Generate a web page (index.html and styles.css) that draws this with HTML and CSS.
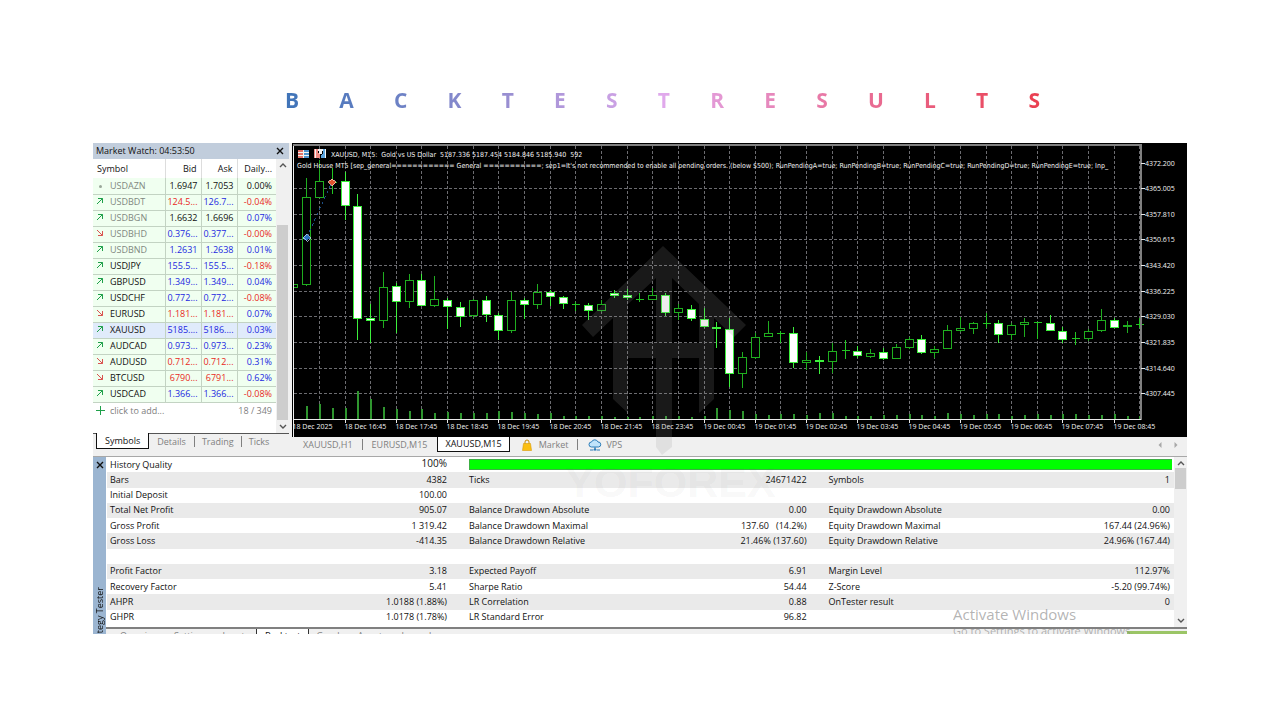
FILE: index.html
```html
<!DOCTYPE html>
<html lang="en">
<head>
  <meta charset="UTF-8" />
  <meta name="viewport" content="width=device-width, initial-scale=1.0" />
  <title>Backtest Results</title>
  <link rel="stylesheet" href="styles.css">
</head>
<body>
  <h1 class="title" aria-label="Backtest results">
    <span>B</span><span>A</span><span>C</span><span>K</span><span>T</span><span>E</span><span>S</span><span>T</span><span>R</span><span>E</span><span>S</span><span>U</span><span>L</span><span>T</span><span>S</span>
  </h1>

  <main class="terminal">
    <div class="top">
      <section class="watch">
        <header class="watch-title">
          <span>Market Watch: 04:53:50</span>
          <button class="close" aria-label="Close Market Watch"><svg viewBox="0 0 8 8"><path d="M1 1l6 6M7 1l-6 6"/></svg></button>
        </header>
        <div class="watch-body">
          <div class="watch-list">
            <table class="symbols">
              <colgroup><col><col class="c-price"><col class="c-price"><col class="c-daily"></colgroup>
              <thead>
                <tr><th>Symbol</th><th>Bid</th><th>Ask</th><th>Daily...</th></tr>
              </thead>
              <tbody>
                <tr class="off"><td><i class="dot"></i>USDAZN</td><td>1.6947</td><td>1.7053</td><td>0.00%</td></tr>
                <tr class="off"><td><svg class="up"><use href="#arrow-up"/></svg>USDBDT</td><td class="red">124.5...</td><td class="blue">126.7...</td><td class="red">-0.04%</td></tr>
                <tr class="off"><td><svg class="up"><use href="#arrow-up"/></svg>USDBGN</td><td>1.6632</td><td>1.6696</td><td class="blue">0.07%</td></tr>
                <tr class="off"><td><svg class="down"><use href="#arrow-down"/></svg>USDBHD</td><td class="blue">0.376...</td><td class="blue">0.377...</td><td class="red">-0.00%</td></tr>
                <tr class="off"><td><svg class="up"><use href="#arrow-up"/></svg>USDBND</td><td class="blue">1.2631</td><td class="blue">1.2638</td><td class="blue">0.01%</td></tr>
                <tr><td><svg class="up"><use href="#arrow-up"/></svg>USDJPY</td><td class="blue">155.5...</td><td class="blue">155.5...</td><td class="red">-0.18%</td></tr>
                <tr><td><svg class="up"><use href="#arrow-up"/></svg>GBPUSD</td><td class="blue">1.349...</td><td class="blue">1.349...</td><td class="blue">0.04%</td></tr>
                <tr><td><svg class="up"><use href="#arrow-up"/></svg>USDCHF</td><td class="blue">0.772...</td><td class="blue">0.772...</td><td class="red">-0.08%</td></tr>
                <tr><td><svg class="down"><use href="#arrow-down"/></svg>EURUSD</td><td class="red">1.181...</td><td class="red">1.181...</td><td class="blue">0.07%</td></tr>
                <tr class="selected"><td><svg class="up"><use href="#arrow-up"/></svg>XAUUSD</td><td class="blue">5185....</td><td class="blue">5186....</td><td class="blue">0.03%</td></tr>
                <tr><td><svg class="up"><use href="#arrow-up"/></svg>AUDCAD</td><td class="blue">0.973...</td><td class="blue">0.973...</td><td class="blue">0.23%</td></tr>
                <tr><td><svg class="down"><use href="#arrow-down"/></svg>AUDUSD</td><td class="red">0.712...</td><td class="red">0.712...</td><td class="blue">0.31%</td></tr>
                <tr><td><svg class="down"><use href="#arrow-down"/></svg>BTCUSD</td><td class="red">6790...</td><td class="red">6791...</td><td class="blue">0.62%</td></tr>
                <tr><td><svg class="up"><use href="#arrow-up"/></svg>USDCAD</td><td class="blue">1.366...</td><td class="blue">1.366...</td><td class="red">-0.08%</td></tr>
              </tbody>
            </table>
            <div class="add-row">
              <button class="add"><svg class="plus" viewBox="0 0 9 9"><path d="M4.5 0v9M0 4.5h9"/></svg>click to add...</button>
              <span>18 / 349</span>
            </div>
          </div>
          <div class="scrollbar">
            <svg viewBox="0 0 8 6"><path d="M1 5l3-3 3 3"/></svg>
            <div class="track watch-track"><div class="thumb"></div></div>
            <svg viewBox="0 0 8 6"><path d="M1 1l3 3 3-3"/></svg>
          </div>
        </div>
        <nav class="watch-tabs">
          <button class="active">Symbols</button>
          <button>Details</button>
          <button>Trading</button>
          <button>Ticks</button>
        </nav>
      </section>

      <section class="chart-pane">
        <svg id="chart" class="chart" viewBox="292 143 895 294" role="img" aria-label="XAUUSD M15 candlestick chart">
          <rect class="bg" x="292" y="143" width="895" height="294"/>
          <g id="grid"></g>
          <g id="volumes"></g>
          <g id="candles"></g>
          <path class="frame" d="M293.5 437V145"/>
          <path class="frame-dim" d="M293 145H1141V420"/>
          <path class="axis" d="M294 419.5H1141"/>
          <g id="labels"></g>

          <path class="trade" d="M307 237L332 182"/>
          <path class="buy" d="M306.500 234l4 4-4 3-4-3z"/>
          <path class="sell" d="M332 186l-4-4 4-3 4 3z"/>

          <g class="one-click">
            <rect x="298" y="150" width="11" height="8" fill="#f4f4f4"/>
            <path d="M298 150h5v2h-5zM298 153h5v2h-5zM298 156h5v2h-5z" fill="#e4756c"/>
            <path d="M304 150h5v2h-5zM304 153h5v2h-5zM304 156h5v2h-5z" fill="#4e93cf"/>
          </g>
          <g class="depth">
            <path d="M314 149h4v4l2 2v3h-6z" fill="#f08c84"/>
            <path d="M326 149h-3v4l-2 2v3h5z" fill="#5aa6e0"/>
            <path d="M318 149h5v2h-1v3h-3v-3h-1z" fill="#f4f4f4"/>
            <path d="M315 149v9M325 149v9" stroke="#f4f4f4"/>
          </g>
          <text class="info" x="331" y="157">XAUUSD, M15:&#160; Gold vs US Dollar&#160; 5187.336 5187.454 5184.846 5185.940&#160; 592</text>
          <text class="info" x="297" y="168">Gold House MT5 [sep_general============ General ===========; sep1=It's not recommended to enable all pending orders. (below $500); RunPendingA=true; RunPendingB=true; RunPendingC=true; RunPendingD=true; RunPendingE=true; Inp_</text>
        </svg>

        <nav class="chart-tabs">
          <button class="h1">XAUUSD,H1</button>
          <button class="m15">EURUSD,M15</button>
          <button class="active">XAUUSD,M15</button>
          <button class="market">
            <svg viewBox="0 0 10 12"><path d="M3 5V3a2 2 0 0 1 4 0v2" fill="none" stroke="#c98a00"/><path d="M1.500 4.500h7l1 7h-9z" fill="#fbbf12" stroke="#d99a06" stroke-width=".6"/></svg>
            Market
          </button>
          <button class="vps">
            <svg viewBox="0 0 14 12"><path d="M3.500 8a2.500 2.500 0 0 1 0-5A3.500 3.500 0 0 1 10 3a2.500 2.500 0 0 1 .5 5z" fill="#bfe3fa" stroke="#2b7cb8"/><path d="M7 8v2M2 11h3.500M8.500 11H12" stroke="#2b7cb8"/><circle cx="7" cy="10.500" r="1.200" fill="#2b7cb8"/></svg>
            VPS
          </button>
          <span class="arrows">
            <button aria-label="Previous tabs"><svg viewBox="0 0 4 6"><path d="M3.500 0v6L.5 3z"/></svg></button>
            <button aria-label="Next tabs"><svg viewBox="0 0 4 6"><path d="M.5 0v6l3-3z"/></svg></button>
          </span>
        </nav>
      </section>
    </div>

    <section class="tester">
      <aside class="tester-side">
        <button class="close" aria-label="Close Strategy Tester"><svg viewBox="0 0 8 8"><path d="M1 1l6 6M7 1l-6 6"/></svg></button>
        <span class="tester-name">Strategy Tester</span>
      </aside>
      <div class="tester-main">
        <div class="tester-body">
          <table class="report">
            <colgroup><col class="c-label"><col class="c-v1"><col class="c-label"><col class="c-v2"><col class="c-label"><col class="c-v3"></colgroup>
            <tbody>
              <tr><th>History Quality</th><td class="quality">100%</td><td colspan="4" class="bar-cell"><div class="bar"></div></td></tr>
              <tr><th>Bars</th><td>4382</td><th>Ticks</th><td>24671422</td><th>Symbols</th><td>1</td></tr>
              <tr><th>Initial Deposit</th><td>100.00</td><th></th><td></td><th></th><td></td></tr>
              <tr><th>Total Net Profit</th><td>905.07</td><th>Balance Drawdown Absolute</th><td>0.00</td><th>Equity Drawdown Absolute</th><td>0.00</td></tr>
              <tr><th>Gross Profit</th><td>1 319.42</td><th>Balance Drawdown Maximal</th><td>137.60 &nbsp; (14.2%)</td><th>Equity Drawdown Maximal</th><td>167.44 (24.96%)</td></tr>
              <tr><th>Gross Loss</th><td>-414.35</td><th>Balance Drawdown Relative</th><td>21.46% (137.60)</td><th>Equity Drawdown Relative</th><td>24.96% (167.44)</td></tr>
              <tr><th></th><td></td><th></th><td></td><th></th><td></td></tr>
              <tr><th>Profit Factor</th><td>3.18</td><th>Expected Payoff</th><td>6.91</td><th>Margin Level</th><td>112.97%</td></tr>
              <tr><th>Recovery Factor</th><td>5.41</td><th>Sharpe Ratio</th><td>54.44</td><th>Z-Score</th><td>-5.20 (99.74%)</td></tr>
              <tr><th>AHPR</th><td>1.0188 (1.88%)</td><th>LR Correlation</th><td>0.88</td><th>OnTester result</th><td>0</td></tr>
              <tr><th>GHPR</th><td>1.0178 (1.78%)</td><th>LR Standard Error</th><td>96.82</td><th></th><td></td></tr>
            </tbody>
          </table>
          <div class="scrollbar">
            <svg viewBox="0 0 8 6"><path d="M1 5l3-3 3 3"/></svg>
            <div class="track"><div class="thumb"></div></div>
            <svg viewBox="0 0 8 6"><path d="M1 1l3 3 3-3"/></svg>
          </div>
        </div>
        <nav class="tester-tabs">
          <button>Overview</button>
          <button>Settings</button>
          <button>Inputs</button>
          <button class="active">Backtest</button>
          <button>Graph</button>
          <button>Agents</button>
          <button>Journal</button>
          <span class="progress"></span>
        </nav>
      </div>
    </section>

    <div class="watermark" aria-hidden="true">
      <svg viewBox="0 0 164 210">
        <path d="M81 0l83 79-12 12-20-19v81l-15 14v-55H90v89l-10 8-6-8v-89H46v55l-15-14V72L11 91 0 79zM74 32L46 58v39h28zM90 32v65h27V58z"/>
      </svg>
      <span>YOFOREX</span>
    </div>
    <div class="activate">
      <strong>Activate Windows</strong>
      <span>Go to Settings to activate Windows.</span>
    </div>
  </main>

  <svg class="defs">
    <symbol id="arrow-up" viewBox="0 0 8 8"><path d="M1 7l5.500-5.500M2 1.500h4.500V6"/></symbol>
    <symbol id="arrow-down" viewBox="0 0 8 8"><path d="M1 1l5.500 5.500M2 6.500h4.500V2"/></symbol>
  </svg>

<script>
  const SVG = "http://www.w3.org/2000/svg";
  const FIRST_X = 306.6;
  const STEP = 12.82;
  const BASE_Y = 419;

  // high, body top, body bottom, low, type (u = hollow, d = filled, x = doji)
  const candles = [
    [178, 197, 285, 286, "u"], [160, 181, 198, 198, "u"], [168, 182, 182, 194, "x"],
    [172, 181, 206, 220, "d"], [194, 206, 319, 340, "d"], [304, 318, 321, 343, "d"],
    [272, 287, 321, 328, "u"], [283, 286, 302, 333, "d"], [274, 280, 302, 308, "u"],
    [274, 280, 306, 306, "d"], [276, 299, 306, 307, "u"], [298, 300, 307, 329, "d"],
    [302, 307, 317, 327, "d"], [299, 300, 316, 318, "u"], [296, 300, 315, 322, "d"],
    [313, 315, 331, 340, "d"], [292, 300, 331, 333, "u"], [298, 300, 305, 319, "d"],
    [284, 292, 305, 309, "u"], [290, 292, 297, 306, "d"], [296, 297, 304, 309, "d"],
    [302, 304, 304, 311, "x"], [303, 305, 311, 320, "d"], [300, 304, 311, 312, "u"],
    [290, 293, 296, 298, "d"], [289, 295, 298, 300, "d"], [293, 299, 299, 302, "x"],
    [288, 295, 300, 300, "u"], [293, 295, 313, 316, "d"], [304, 308, 313, 320, "u"],
    [305, 309, 319, 321, "d"], [308, 319, 327, 328, "d"], [322, 327, 329, 348, "d"],
    [318, 329, 374, 387, "d"], [352, 357, 374, 388, "u"], [333, 337, 358, 359, "u"],
    [321, 333, 337, 337, "u"], [331, 333, 333, 343, "x"], [327, 333, 363, 368, "d"],
    [352, 360, 363, 370, "u"], [356, 360, 362, 374, "d"], [343, 351, 362, 373, "u"],
    [340, 350, 350, 359, "x"], [346, 351, 356, 358, "d"], [349, 353, 357, 358, "u"],
    [348, 352, 359, 360, "d"], [344, 347, 359, 359, "u"], [337, 339, 348, 349, "u"],
    [335, 339, 353, 354, "d"], [346, 349, 353, 358, "u"], [325, 330, 349, 349, "u"],
    [317, 328, 331, 332, "u"], [322, 323, 329, 334, "u"], [313, 323, 323, 328, "x"],
    [320, 323, 335, 343, "d"], [323, 325, 335, 340, "u"], [318, 322, 325, 337, "u"],
    [322, 322, 322, 339, "x"], [315, 323, 331, 331, "d"], [327, 331, 340, 343, "d"],
    [332, 338, 338, 345, "x"], [329, 331, 339, 341, "u"], [309, 320, 331, 332, "u"],
    [318, 320, 328, 328, "d"], [321, 325, 327, 333, "u"], [318, 324, 324, 328, "x"]
  ];

  const volumes = [
    13, 15, 11, 11, 28, 20, 12, 10, 8, 10, 6, 7, 6, 6, 6, 8, 7, 6, 5, 6, 3, 3,
    3, 3, 2, 2, 2, 3, 3, 3, 2, 3, 11, 9, 8, 5, 4, 5, 5, 4, 6, 6, 3, 3, 3, 4,
    4, 5, 4, 3, 6, 5, 4, 5, 5, 3, 4, 5, 4, 5, 5, 4, 4, 5, 3, 3
  ];

  const prices = ["4372.200", "4365.005", "4357.810", "4350.615", "4343.420",
    "4336.225", "4329.030", "4321.835", "4314.640", "4307.445"];

  const times = ["18 Dec 2025", "18 Dec 16:45", "18 Dec 17:45", "18 Dec 18:45",
    "18 Dec 19:45", "18 Dec 20:45", "18 Dec 21:45", "18 Dec 23:45", "19 Dec 00:45",
    "19 Dec 01:45", "19 Dec 02:45", "19 Dec 03:45", "19 Dec 04:45", "19 Dec 05:45",
    "19 Dec 06:45", "19 Dec 07:45", "19 Dec 08:45"];

  function add(parent, tag, attrs, text) {
    const el = document.createElementNS(SVG, tag);
    for (const k in attrs) el.setAttribute(k, attrs[k]);
    if (text) el.textContent = text;
    document.getElementById(parent).appendChild(el);
  }

  const xAt = i => Math.floor(FIRST_X + STEP * i) + 0.5;

  // grid and price scale
  for (let i = 1; i < 66; i += 2) {
    add("grid", "path", { d: `M${xAt(i)} 146V419` });
  }
  prices.forEach((p, i) => {
    const y = Math.floor(163 + 25.65 * i) + 0.5;
    if (i > 0) add("grid", "path", { d: `M294 ${y}H1140` });
    add("labels", "path", { class: "tick", d: `M1141 ${y}h4` });
    add("labels", "text", { x: 1145, y: y + 2.5 }, p);
  });

  // time scale
  times.forEach((t, i) => {
    const x = i ? xAt(i * 4 - 1) : 293.5;
    if (i) add("labels", "path", { class: "tick", d: `M${x} 420v3` });
    add("labels", "text", { x: x - 1, y: 429 }, t);
  });

  volumes.forEach((v, i) => {
    add("volumes", "path", { d: `M${xAt(i)} ${BASE_Y}v${-v}` });
  });

  add("candles", "path", { class: "u", d: "M294 284.500h3.500v3h-3.500" });
  candles.forEach(([high, top, bottom, low, type], i) => {
    const x = xAt(i);
    if (type === "x") {
      add("candles", "path", { class: "x", d: `M${x} ${high}V${low}M${x - 4} ${top + 0.5}h8` });
      return;
    }
    add("candles", "path", { class: type, d: `M${x} ${high}V${top}M${x} ${bottom}V${low}` });
    add("candles", "rect", { class: type, x: x - 4, y: top + 0.5, width: 8, height: Math.max(bottom - top - 1, 1) });
  });
</script>
</body>
</html>
```
FILE: styles.css
```css
* {
  box-sizing: border-box;
}
body {
  margin: 0;
  background: #fff;
  color: #111;
  font-family: "Open Sans", "Noto Sans", sans-serif;
  font-size: 9px;
  line-height: 12px;
}
button {
  font: inherit;
  color: inherit;
  background: none;
  border: 0;
  padding: 0;
  cursor: pointer;
}
svg {
  display: block;
}
.defs {
  display: none;
}

/* heading */
.title {
  display: flex;
  justify-content: space-between;
  width: 59%;
  height: 32px;
  margin: 84px auto 27px 285px;
  font-size: 21px;
  font-weight: 700;
  line-height: 32px;
  color: transparent;
  background: linear-gradient(90deg, #3f74b8, #9a8fd2 30%, #e0a9ec 50%, #e87fb0 68%, #ea3f50);
  -webkit-background-clip: text;
  background-clip: text;
}

/* terminal window */
.terminal {
  position: relative;
  margin: 0 93px;
  background: #f0f0f0;
  overflow: hidden;
}
.top {
  display: grid;
  grid-template-columns: 196px 1fr;
  column-gap: 3px;
  border-bottom: 1px solid #a8a8a8;
}
.close svg {
  width: 8px;
  height: 8px;
  fill: none;
  stroke: #111;
  stroke-width: 1.4;
}

/* market watch */
.watch {
  display: flex;
  flex-direction: column;
}
.watch-title {
  display: flex;
  align-items: center;
  justify-content: space-between;
  height: 16px;
  padding: 0 5px 0 3px;
  background: #c1cddc;
}
.watch-body {
  display: flex;
  flex: 1;
  background: #fff;
}
.watch-list {
  flex: 1;
}
.symbols {
  width: 100%;
  table-layout: fixed;
  border-collapse: collapse;
}
.c-price {
  width: 36px;
}
.c-daily {
  width: 39px;
}
.symbols th {
  height: 19px;
  padding: 0 4px;
  font-weight: 400;
  text-align: right;
  border-left: 1px solid #ddd;
}
.symbols th:first-child {
  text-align: left;
  border-left: 0;
}
.symbols td {
  height: 16px;
  padding: 0 3px 0 0;
  text-align: right;
  white-space: nowrap;
  background: #f0fff0;
  border-left: 1px solid #c3d3c3;
  border-bottom: 1px solid #c3d3c3;
}
.symbols td:last-child {
  padding-right: 4px;
}
.symbols td:first-child {
  padding-left: 3px;
  text-align: left;
  border-left: 0;
}
.symbols td svg,
.symbols .dot {
  display: inline-block;
  width: 8px;
  height: 8px;
  margin-right: 6px;
  vertical-align: baseline;
  fill: none;
}
.symbols .dot {
  width: 3px;
  height: 3px;
  margin: 0 8px 0 3px;
  border-radius: 50%;
  background: #9aa89a;
  vertical-align: middle;
}
.up {
  stroke: #1fa04a;
}
.down {
  stroke: #d9534f;
}
.symbols .off td:first-child {
  color: #808880;
}
.symbols .selected td {
  background: #e0ebfb;
}
.symbols .red {
  color: #e8291c;
}
.symbols .blue {
  color: #1c28e0;
}
.add-row {
  display: flex;
  justify-content: space-between;
  height: 16px;
  padding: 0 4px 0 3px;
  line-height: 16px;
  color: #808080;
}
.add {
  display: flex;
  align-items: center;
  gap: 5px;
}
.plus {
  width: 9px;
  height: 9px;
  stroke: #1fa04a;
}
.scrollbar {
  display: flex;
  flex-direction: column;
  align-items: center;
  width: 13px;
  padding: 3px 0;
  background: #f0f0f0;
}
.scrollbar > svg {
  width: 8px;
  height: 6px;
  fill: none;
  stroke: #555;
  stroke-width: 1.4;
}
.track {
  flex: 1;
  align-self: stretch;
  padding-top: 2px;
}
.thumb {
  height: 21px;
  margin: 0 1px;
  background: #cdcdcd;
}
.watch-track {
  padding: 57px 0 4px;
}
.watch-track .thumb {
  height: 100%;
}
.watch-tabs {
  display: flex;
  align-items: flex-start;
  height: 23px;
  padding-left: 3px;
  border-top: 1px solid #555;
  color: #808080;
}
.watch-tabs button {
  height: 15px;
  padding: 0 8px;
}
.watch-tabs button + button + button {
  height: 11px;
  margin-top: 2px;
  padding: 0 7px;
  line-height: 11px;
  border-left: 1px solid #808080;
}
.watch-tabs .active {
  height: 16px;
  margin-top: -1px;
  background: #fff;
  color: #111;
  border: 1px solid #111;
  border-top: 0;
}

/* chart */
.chart-pane {
  display: flex;
  flex-direction: column;
}
.chart {
  width: 100%;
  height: auto;
  fill: none;
  shape-rendering: crispEdges;
}
.chart .bg {
  fill: #000;
}
.chart text {
  font-size: 7px;
  fill: #f2f2f2;
}
.chart .info {
  font-family: "DejaVu Sans Condensed", "DejaVu Sans", sans-serif;
  font-stretch: condensed;
}
#grid path {
  stroke: #6c6c70;
  stroke-dasharray: 3 2;
}
#volumes path {
  stroke: #2f962f;
  stroke-width: 2;
}
#candles .u {
  fill: #000;
  stroke: #1fae1f;
}
#candles .d {
  fill: #fff;
  stroke: #3cf03c;
}
#candles .x {
  stroke: #22c522;
}
.frame {
  stroke: #f0f0f0;
}
.frame-dim {
  stroke: #808080;
  stroke-width: 2;
}
.axis,
.tick {
  stroke: #e8e8e8;
}
.trade {
  stroke: #1d4f86;
  stroke-dasharray: 3 3;
}
.buy {
  fill: #2b6fc0;
  stroke: #cfe3f7;
  stroke-width: .7;
}
.sell {
  fill: #e2512f;
  stroke: #ffe3d0;
  stroke-width: .7;
}
.chart-tabs {
  display: flex;
  align-items: flex-start;
  height: 19px;
  padding-left: 1px;
  color: #808080;
}
.chart-tabs button {
  display: flex;
  align-items: center;
  gap: 7px;
  height: 15px;
  padding: 0 10px;
}
.chart-tabs .m15 {
  padding: 0 10px 0 9px;
}
.chart-tabs .h1,
.chart-tabs .market {
  height: 11px;
  margin-top: 2px;
  padding-right: 9px;
  border-right: 1px solid #808080;
}
.chart-tabs .market {
  padding-left: 12px;
}
.chart-tabs .active {
  padding: 0 7px;
  color: #111;
  background: #fff;
  border: 1px solid #111;
  border-top: 0;
}
.market svg {
  width: 10px;
  height: 12px;
}
.vps svg {
  width: 14px;
  height: 12px;
  fill: none;
}
.chart-tabs .vps {
  gap: 4px;
}
.arrows {
  display: flex;
  margin-left: auto;
  padding-right: 3px;
}
.chart-tabs .arrows button {
  padding: 0 6px;
}
.arrows svg {
  width: 4px;
  height: 6px;
  fill: #a8a8a8;
}

/* strategy tester */
.tester {
  display: grid;
  grid-template-columns: 13px 1fr;
  height: 177px;
}
.tester-side {
  display: flex;
  flex-direction: column;
  align-items: center;
  justify-content: space-between;
  height: 177px;
  padding-top: 4px;
  background: #9bb5d1;
  overflow: hidden;
}
.tester-name {
  margin-bottom: -16px;
  writing-mode: vertical-rl;
  transform: rotate(180deg);
  white-space: nowrap;
}
.tester-main {
  display: flex;
  flex-direction: column;
  min-width: 0;
  overflow: hidden;
}
.tester-body {
  display: flex;
  height: 172px;
  background: #fff;
  border-bottom: 2px solid #808080;
}
.report {
  flex: 1;
  width: 100%;
  height: 168px;
  margin-left: 1px;
  table-layout: fixed;
  border-collapse: collapse;
}
.c-label { width: 17%; }
.c-v1 { width: 15.9%; }
.c-v2 { width: 16.7%; }
.c-v3 { width: 16.4%; }
.report th,
.report td {
  height: 15px;
  padding: 0 11px;
  font-weight: 400;
  white-space: nowrap;
}
.report th {
  text-align: left;
}
.report td {
  text-align: right;
}
.report th:first-child {
  padding-left: 3px;
}
.report td:last-child {
  padding-right: 4px;
}
.report tr:nth-child(even) {
  background: #eaeaea;
}
.report .quality {
  font-size: 10px;
  vertical-align: top;
}
.report .bar-cell:last-child {
  padding-right: 2px;
}
.bar {
  height: 11px;
  background: #0f0;
  border: 1px solid #3cb043;
  border-right: 0;
}
.tester-tabs {
  display: flex;
  height: 5px;
  overflow: hidden;
  color: #808080;
}
.tester-tabs button {
  height: 14px;
  padding: 0 7px 0 8px;
}
.tester-tabs button:first-child {
  padding-left: 14px;
}
.tester-tabs .active {
  color: #111;
  background: #fff;
  border: 1px solid #333;
  border-top: 0;
}
.progress {
  align-self: flex-end;
  width: 60px;
  height: 3px;
  margin-left: auto;
  background: #9bc566;
}

/* overlays */
.watermark {
  position: absolute;
  top: 103px;
  left: 44%;
  width: 216px;
  margin-left: -9px;
  pointer-events: none;
}
.watermark svg {
  width: 164px;
  height: 210px;
  margin-left: 17px;
  fill: #969696;
  fill-rule: evenodd;
  opacity: .17;
}
.watermark span {
  display: block;
  font-family: "Liberation Sans", sans-serif;
  font-size: 43px;
  font-weight: 700;
  line-height: 52px;
  color: rgba(90, 90, 90, .05);
}
.activate {
  position: absolute;
  top: 461px;
  right: 50px;
  width: 184px;
  height: 30px;
  overflow: hidden;
  color: rgba(130, 130, 130, .6);
  white-space: nowrap;
  pointer-events: none;
}
.activate strong {
  display: block;
  font-size: 15px;
  font-weight: 400;
  line-height: 20px;
}
.activate span {
  font-size: 11px;
  line-height: 14px;
}
```
